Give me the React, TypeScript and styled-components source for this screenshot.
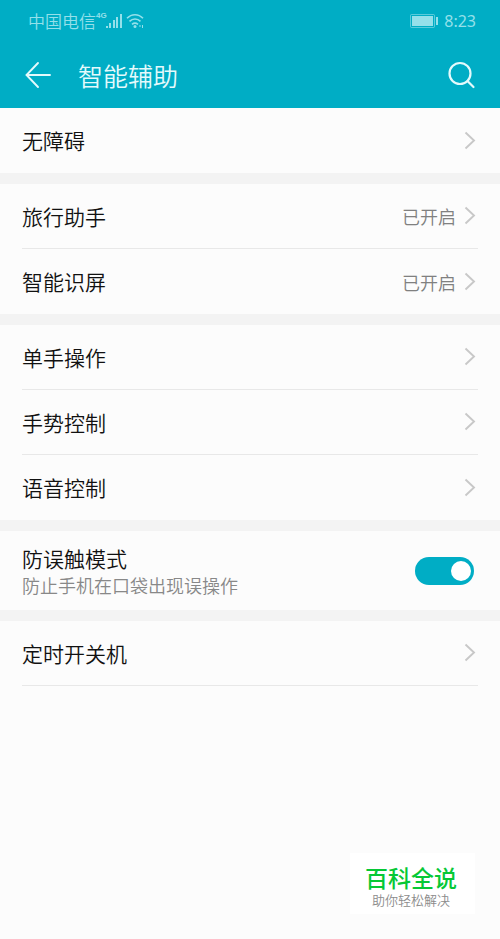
import React, { useState } from "react";
import styled, { createGlobalStyle } from "styled-components";

const GlobalStyle = createGlobalStyle`
  *, *::before, *::after { box-sizing: border-box; }
  body {
    margin: 0;
    background: #fcfcfc;
    color: #111;
    font-family: "Noto Sans CJK SC", "Noto Sans", sans-serif;
    font-weight: 350;
  }
  button { font: inherit; color: inherit; border: 0; background: none; padding: 0; cursor: pointer; }
  svg { display: block; flex: none; }
`;

const Page = styled.div`
  position: relative;
  min-height: 100vh;
`;

const Header = styled.header`
  background: #00adc5;
  color: #e4fafc;
`;

const StatusBar = styled.div`
  display: flex;
  align-items: center;
  justify-content: space-between;
  height: 42px;
  padding: 0 24px 0 28px;
  color: #94e0ea;
`;

const StatusGroup = styled.div`
  display: flex;
  align-items: center;
`;

const Carrier = styled.span`
  font-size: 17px;
  line-height: 24px;
`;

const Network = styled.span`
  align-self: flex-start;
  width: 10px;
  font-family: "Liberation Sans", sans-serif;
  font-size: 8px;
  line-height: 14px;
  font-weight: 700;
`;

const Clock = styled.time`
  margin-left: 5px;
  font-family: "Noto Sans", sans-serif;
  font-size: 16px;
  line-height: 24px;
  font-weight: 400;
`;

const TitleBar = styled.div`
  display: flex;
  align-items: center;
  height: 66px;
  padding: 0 24px;
`;

const IconButton = styled.button`
  display: flex;
`;

const Title = styled.h1`
  flex: 1;
  margin: 0 0 0 26px;
  font-size: 25px;
  line-height: 36px;
  font-weight: 350;
`;

const List = styled.main`
  display: flex;
  flex-direction: column;
  gap: 11px;
  background: #f3f3f3;
`;

const Group = styled.section<{ $closed?: boolean }>`
  padding: 0 22px;
  background: #fcfcfc;
  > *:not(:last-child) { border-bottom: 1px solid #e8e8e8; }
  > *:last-child { border-bottom: ${(p) => (p.$closed ? "1px solid #e8e8e8" : "0")}; }
`;

const Row = styled.button`
  display: flex;
  align-items: center;
  width: 100%;
  height: 65px;
  padding-right: 2px;
  text-align: left;
`;

const Label = styled.span`
  flex: 1;
  padding-bottom: 1px;
  font-size: 21px;
  line-height: 30px;
`;

const Value = styled.span`
  margin-right: 8px;
  color: #808080;
  font-size: 18px;
  line-height: 26px;
`;

const SwitchRow = styled.label`
  display: flex;
  align-items: center;
  justify-content: space-between;
  height: 79px;
  padding-right: 4px;
`;

const SwitchText = styled.span`
  display: flex;
  flex-direction: column;
`;

const SwitchTitle = styled.span`
  font-size: 21px;
  line-height: 28px;
`;

const Hint = styled.span`
  color: #888;
  font-size: 18px;
  line-height: 26px;
`;

const Switch = styled.input`
  appearance: none;
  display: flex;
  align-items: center;
  justify-content: flex-start;
  width: 59px;
  height: 28px;
  margin: 0;
  padding: 0 3px;
  border-radius: 14px;
  background: #bdbdbd;
  cursor: pointer;
  &::before {
    content: "";
    width: 20px;
    height: 20px;
    border-radius: 50%;
    background: #fff;
  }
  &:checked { justify-content: flex-end; background: #00adc5; }
`;

const Badge = styled.aside`
  position: absolute;
  right: 25px;
  bottom: 25px;
  padding: 13px 18px 5px 15px;
  background: #fff;
  font-family: "Liberation Sans", "Noto Sans CJK SC", sans-serif;
  text-align: center;
`;

const BadgeName = styled.div`
  color: #06c836;
  font-size: 23px;
  line-height: 27px;
  font-weight: 500;
`;

const BadgeSlogan = styled.div`
  color: #8c8c8c;
  font-size: 13px;
  line-height: 16px;
`;

const SignalIcon = () => (
  <svg width="17" height="16" viewBox="0 0 17 16" fill="currentColor" aria-hidden="true">
    <rect x="0" y="13" width="2" height="2" />
    <rect x="3" y="10" width="2" height="5" />
    <rect x="7" y="7" width="2" height="8" />
    <rect x="10" y="4" width="2" height="11" />
    <rect x="14" y="1" width="2" height="14" />
  </svg>
);

const StatusGlyph = styled.svg`
  margin-left: 3px;
`;

const WifiIcon = () => (
  <StatusGlyph width="20" height="16" viewBox="0 0 20 16" fill="none" stroke="currentColor" strokeWidth="1.6" aria-hidden="true">
    <path d="M1 5.3C5.5 .5 12.5 .5 17 5.3M3.5 8.4c3.2-3.3 7.8-3.3 11 0M6 11.4c2-1.7 4-1.7 6 0" />
    <circle cx="9" cy="13.5" r="1.5" fill="currentColor" stroke="none" />
    <path d="M14 12v2M16.5 12v3" strokeWidth="1" />
  </StatusGlyph>
);

const BatteryIcon = () => (
  <svg width="29" height="14" viewBox="0 0 29 14" fill="currentColor" aria-hidden="true">
    <rect x=".5" y=".5" width="24" height="13" rx="1" fill="none" stroke="currentColor" strokeOpacity=".6" />
    <rect x="2" y="2" width="21" height="10" />
    <rect x="26" y="3" width="2" height="8" />
  </svg>
);

const BackIcon = () => (
  <svg width="28" height="28" viewBox="0 0 28 28" fill="none" stroke="currentColor" strokeWidth="1.9" strokeLinecap="round" aria-hidden="true">
    <path d="M26 14H3M14 2 2.5 14 14 26" />
  </svg>
);

const SearchIcon = () => (
  <svg width="28" height="28" viewBox="0 0 28 28" fill="none" stroke="currentColor" strokeWidth="2.2" strokeLinecap="round" aria-hidden="true">
    <circle cx="12" cy="12.5" r="10.5" />
    <path d="m19.5 20 6 6" />
  </svg>
);

const Chevron = () => (
  <svg width="12" height="20" viewBox="0 0 12 20" fill="none" stroke="#c8c8c8" strokeWidth="1.9" aria-hidden="true">
    <path d="m1.5 1.5 8.5 8-8.5 8" />
  </svg>
);

type Item = { label: string; value?: string };

const Entry = ({ label, value }: Item) => (
  <Row type="button">
    <Label>{label}</Label>
    {value && <Value>{value}</Value>}
    <Chevron />
  </Row>
);

const leading: Item[][] = [
  [{ label: "无障碍" }],
  [
    { label: "旅行助手", value: "已开启" },
    { label: "智能识屏", value: "已开启" },
  ],
  [{ label: "单手操作" }, { label: "手势控制" }, { label: "语音控制" }],
];

export default function App() {
  const [guard, setGuard] = useState(true);
  return (
    <Page>
      <GlobalStyle />
      <Header>
        <StatusBar>
          <StatusGroup>
            <Carrier>中国电信</Carrier>
            <Network>4G</Network>
            <SignalIcon />
            <WifiIcon />
          </StatusGroup>
          <StatusGroup>
            <BatteryIcon />
            <Clock>8:23</Clock>
          </StatusGroup>
        </StatusBar>
        <TitleBar>
          <IconButton type="button" aria-label="返回">
            <BackIcon />
          </IconButton>
          <Title>智能辅助</Title>
          <IconButton type="button" aria-label="搜索">
            <SearchIcon />
          </IconButton>
        </TitleBar>
      </Header>
      <List>
        {leading.map((items) => (
          <Group key={items[0].label}>
            {items.map((item) => (
              <Entry key={item.label} {...item} />
            ))}
          </Group>
        ))}
        <Group>
          <SwitchRow>
            <SwitchText>
              <SwitchTitle>防误触模式</SwitchTitle>
              <Hint>防止手机在口袋出现误操作</Hint>
            </SwitchText>
            <Switch
              type="checkbox"
              role="switch"
              checked={guard}
              onChange={(e) => setGuard(e.target.checked)}
            />
          </SwitchRow>
        </Group>
        <Group $closed>
          <Entry label="定时开关机" />
        </Group>
      </List>
      <Badge>
        <BadgeName>百科全说</BadgeName>
        <BadgeSlogan>助你轻松解决</BadgeSlogan>
      </Badge>
    </Page>
  );
}
